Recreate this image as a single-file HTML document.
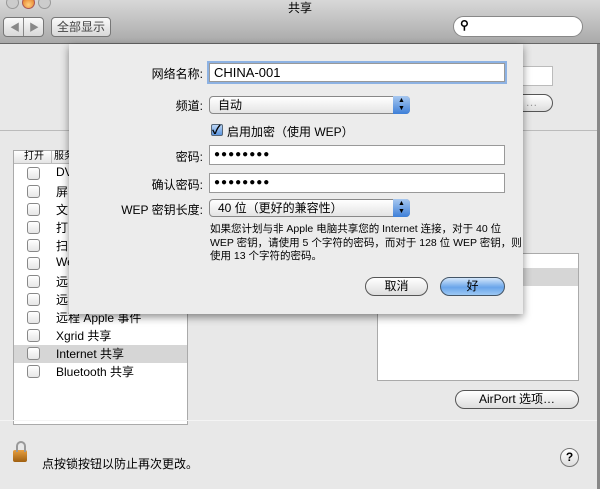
<!DOCTYPE html>
<html><head><meta charset="utf-8"><style>
*{margin:0;padding:0;box-sizing:border-box}
body{width:600px;height:489px;overflow:hidden;background:#e8e8e8;font-family:"Liberation Sans","Noto Sans CJK SC",sans-serif;font-size:12px;color:#000;position:relative}
.a{position:absolute}
.tb{left:0;top:0;width:600px;height:44px;background:linear-gradient(#d8d8d8,#a9a9a9);border-bottom:1px solid #666}
.btn{border:1px solid #777;border-radius:4px;background:linear-gradient(#fafafa,#d8d8d8)}
.inp{background:#fff;border:1px solid #999;font-size:13px;padding-left:4px;line-height:17px}
.pop{border:1px solid #888;border-radius:4px;background:linear-gradient(#fff,#e4e4e4);font-size:12px;padding-left:8px;line-height:16px}
.arr{position:absolute;right:-1px;top:-1px;width:17px;height:18px;border-radius:0 4px 4px 0;background:linear-gradient(#a8c8f0,#3d7fd8);color:#000;font-size:7px;text-align:center;line-height:8px;padding-top:1px}
.lab{text-align:right;width:140px;font-size:12px}
.cb{width:13px;height:13px;border:1px solid #888;border-radius:3px;background:linear-gradient(#fff,#e6e6e6)}
.rb{border:1px solid #555;border-radius:10px;background:linear-gradient(#fff,#ddd);text-align:center;font-size:12px}
</style></head><body>
<div class="a tb"></div>
<div class="a" style="left:6px;top:-4px;width:13px;height:13px;border-radius:50%;background:#ccc;border:1px solid #999"></div>
<div class="a" style="left:22px;top:-4px;width:13px;height:13px;border-radius:50%;background:radial-gradient(circle at 50% 70%,#ffd080,#e06a10);border:1px solid #a55"></div>
<div class="a" style="left:38px;top:-4px;width:13px;height:13px;border-radius:50%;background:#ccc;border:1px solid #999"></div>
<div class="a" style="left:250px;top:-1px;width:100px;text-align:center;font-size:12px">共享</div>
<div class="a btn" style="left:3px;top:17px;width:41px;height:20px"></div>
<div class="a" style="left:23px;top:18px;width:1px;height:18px;background:#888"></div>
<div class="a" style="left:10px;top:19px;font-size:10px;color:#888">◀</div>
<div class="a" style="left:29px;top:19px;font-size:10px;color:#888">▶</div>
<div class="a btn" style="left:51px;top:17px;width:60px;height:20px;text-align:center;line-height:18px;color:#444">全部显示</div>
<div class="a" style="left:453px;top:16px;width:130px;height:21px;border-radius:11px;background:#fff;border:1px solid #888"></div>
<div class="a" style="left:460px;top:18px;font-size:12px;font-weight:bold">⚲</div>
<div class="a" style="left:0;top:130px;width:598px;height:1px;background:#bbb"></div>
<div class="a" style="left:597px;top:44px;width:3px;height:445px;background:#888"></div>
<div class="a" style="left:71px;top:67px;color:#aaa">电脑名称:</div>
<div class="a inp" style="left:520px;top:66px;width:33px;height:20px;border-color:#bbb"></div>
<div class="a rb" style="left:510px;top:94px;width:43px;height:18px;color:#999">…</div>
<div class="a" style="left:13px;top:150px;width:175px;height:275px;background:#fff;border:1px solid #aaa"></div>
<div class="a" style="left:14px;top:151px;width:173px;height:13px;background:linear-gradient(#fff,#e4e4e4);border-bottom:1px solid #bbb;font-size:10px;line-height:12px"><span style="margin-left:10px">打开</span><span style="position:absolute;left:37px;top:0;width:1px;height:12px;background:#bbb"></span><span style="margin-left:10px">服务</span></div>
<div class="a" style="left:14px;top:345px;width:173px;height:18px;background:#d6d6d6"></div>
<div id="list"></div>
<div class="a" style="left:377px;top:253px;width:202px;height:128px;background:#fff;border:1px solid #aaa"></div>
<div class="a" style="left:378px;top:268px;width:200px;height:18px;background:#d6d6d6"></div>
<div class="a rb" style="left:455px;top:390px;width:124px;height:19px;line-height:17px">AirPort 选项…</div>
<div class="a" style="left:0;top:420px;width:597px;height:1px;background:#f4f4f4"></div>
<div class="a" style="left:13px;top:450px;width:14px;height:12px;background:linear-gradient(#e8a040,#a06010);border-radius:2px"></div>
<div class="a" style="left:16px;top:441px;width:10px;height:11px;border:2px solid #999;border-bottom:0;border-radius:5px 5px 0 0"></div>
<div class="a" style="left:42px;top:455px;font-size:12px">点按锁按钮以防止再次更改。</div>
<div class="a" style="left:560px;top:448px;width:19px;height:19px;border-radius:50%;border:1px solid #777;background:linear-gradient(#fff,#ddd);text-align:center;font-weight:bold;line-height:17px;font-size:12px">?</div>
<div class="a" style="left:69px;top:44px;width:454px;height:270px;background:#ececec;box-shadow:0 3px 8px rgba(0,0,0,.45)"></div>
<div class="a lab" style="left:63px;top:65px">网络名称:</div>
<div class="a inp" style="left:209px;top:63px;width:296px;height:19px;box-shadow:0 0 0 2px #8db2e3">CHINA-001</div>
<div class="a lab" style="left:63px;top:97px">频道:</div>
<div class="a pop" style="left:209px;top:96px;width:201px;height:18px">自动<div class="arr">▲<br>▼</div></div>
<div class="a" style="left:211px;top:124px;width:12px;height:12px;border:1px solid #567;border-radius:2px;background:linear-gradient(#bcd6f6,#5b95e0);font-size:12px;line-height:10px;font-weight:bold">✓</div>
<div class="a" style="left:227px;top:123px">启用加密（使用 WEP）</div>
<div class="a lab" style="left:63px;top:148px">密码:</div>
<div class="a inp" style="left:209px;top:145px;width:296px;height:20px;font-size:10px;letter-spacing:1px;line-height:18px">●●●●●●●●</div>
<div class="a lab" style="left:63px;top:176px">确认密码:</div>
<div class="a inp" style="left:209px;top:173px;width:296px;height:20px;font-size:10px;letter-spacing:1px;line-height:18px">●●●●●●●●</div>
<div class="a lab" style="left:63px;top:201px">WEP 密钥长度:</div>
<div class="a pop" style="left:209px;top:199px;width:201px;height:18px">40 位（更好的兼容性）<div class="arr">▲<br>▼</div></div>
<div class="a" style="left:210px;top:223px;width:320px;white-space:nowrap;font-size:10.5px;line-height:13.5px">如果您计划与非 Apple 电脑共享您的 Internet 连接，对于 40 位<br>WEP 密钥，请使用 5 个字符的密码，而对于 128 位 WEP 密钥，则<br>使用 13 个字符的密码。</div>
<div class="a rb" style="left:365px;top:277px;width:63px;height:19px;line-height:17px">取消</div>
<div class="a rb" style="left:440px;top:277px;width:65px;height:19px;line-height:17px;background:linear-gradient(#d4e6fb,#6aa5ea 55%,#9cc8f4);border-color:#456">好</div>
<script>
var items=["DV","屏","文","打","扫","We","远","远","远程 Apple 事件","Xgrid 共享","Internet 共享","Bluetooth 共享"],h="";
items.forEach(function(t,i){var y=165+i*18;h+='<div class="a cb" style="left:27px;top:'+(y+2)+'px"></div><div class="a" style="left:56px;top:'+y+'px">'+t+'</div>';});
document.getElementById("list").innerHTML=h;
</script>
</body></html>
